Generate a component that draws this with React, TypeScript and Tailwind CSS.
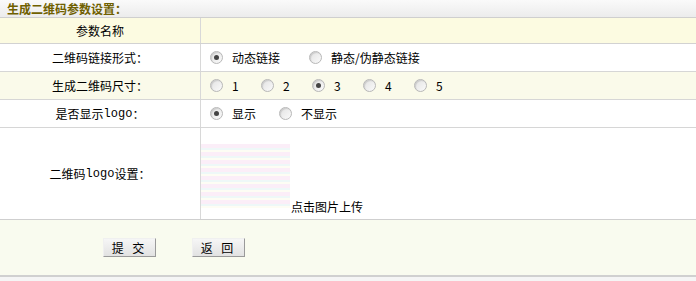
import React from "react";

function Radio({ checked }: { checked?: boolean }) {
  return (
    <span className="inline-flex items-center justify-center w-[13px] h-[13px] rounded-full border border-[#b8b8b8] bg-gradient-to-br from-[#e2e2e2] to-[#fafafa] shadow-[inset_1px_1px_1px_rgba(0,0,0,0.12)]">
      {checked && <span className="w-[5px] h-[5px] rounded-full bg-[#444]" />}
    </span>
  );
}

function Opt({ checked, label, w }: { checked?: boolean; label: string; w: string }) {
  return (
    <span className={`inline-flex items-center ${w}`}>
      <Radio checked={checked} />
      <span className="ml-[9px]">{label}</span>
    </span>
  );
}

export default function App() {
  return (
    <div
      className="w-[696px] h-[281px] bg-white text-[12px] text-black overflow-hidden"
      style={{ fontFamily: '"Noto Sans CJK SC", "Noto Sans", sans-serif' }}
    >
      <div className="h-[18px] bg-gradient-to-b from-[#fafafa] to-[#ececec] border-b border-[#cfcfcf] flex items-start pl-[7px] pt-[1px]">
        <span className="font-bold text-[#6f6000] text-[12px] leading-[15px]">生成二维码参数设置：</span>
      </div>
      <div className="flex h-[26px] bg-[#fcfbe1] border-b border-[#d2d2d2]">
        <div className="w-[201px] border-r border-[#d8d8d8] flex items-center justify-center">参数名称</div>
        <div className="flex-1" />
      </div>
      <div className="flex h-[28px] bg-white border-b border-[#d6d6d6]">
        <div className="w-[201px] border-r border-[#d8d8d8] flex items-center justify-center">二维码链接形式：</div>
        <div className="flex-1 flex items-center pl-[9px]">
          <Opt checked label="动态链接" w="w-[99px]" />
          <Opt label="静态/伪静态链接" w="" />
        </div>
      </div>
      <div className="flex h-[28px] bg-[#fafaea] border-b border-[#d6d6d6]">
        <div className="w-[201px] border-r border-[#d8d8d8] flex items-center justify-center">生成二维码尺寸：</div>
        <div className="flex-1 flex items-center pl-[9px]">
          <Opt label="1" w="w-[51px]" />
          <Opt label="2" w="w-[51px]" />
          <Opt checked label="3" w="w-[51px]" />
          <Opt label="4" w="w-[51px]" />
          <Opt label="5" w="" />
        </div>
      </div>
      <div className="flex h-[28px] bg-white border-b border-[#d6d6d6]">
        <div className="w-[201px] border-r border-[#d8d8d8] flex items-center justify-center">
          <span>是否显示</span>
          <span style={{ fontFamily: '"Liberation Mono", monospace' }}>logo</span>
          <span>：</span>
        </div>
        <div className="flex-1 flex items-center pl-[9px]">
          <Opt checked label="显示" w="w-[69px]" />
          <Opt label="不显示" w="" />
        </div>
      </div>
      <div className="flex h-[92px] bg-white border-b border-[#cfcfcf]">
        <div className="w-[201px] border-r border-[#d8d8d8] flex items-center justify-center">
          <span>二维码</span>
          <span style={{ fontFamily: '"Liberation Mono", monospace' }}>logo</span>
          <span>设置：</span>
        </div>
        <div className="flex-1 flex items-end pb-[3px]">
          <div className="w-[89px] h-[64px] mb-[8px] bg-[repeating-linear-gradient(180deg,#fbeef8_0px,#fbeef8_4px,#eef8f8_4px,#eef8f8_6px,#fdfdf4_6px,#fdfdf4_8px)]" />
          <span className="ml-[1px]">点击图片上传</span>
        </div>
      </div>
      <div className="h-[57px] bg-[#f9fbef] border-b-2 border-[#d0d0d0] flex items-center pl-[103px] gap-[36px]">
        <button className="w-[53px] h-[19px] bg-gradient-to-b from-[#f6f6f6] to-[#e2e2e2] border-r border-b border-[#9a9a9a] border-t border-l border-t-[#f0f0f0] border-l-[#f0f0f0] text-[12px] leading-none tracking-[3px] flex items-center justify-center">
          提 交
        </button>
        <button className="w-[53px] h-[19px] bg-gradient-to-b from-[#f6f6f6] to-[#e2e2e2] border-r border-b border-[#9a9a9a] border-t border-l border-t-[#f0f0f0] border-l-[#f0f0f0] text-[12px] leading-none tracking-[3px] flex items-center justify-center">
          返 回
        </button>
      </div>
      <div className="h-[10px] bg-[#f5f5f5]" />
    </div>
  );
}
